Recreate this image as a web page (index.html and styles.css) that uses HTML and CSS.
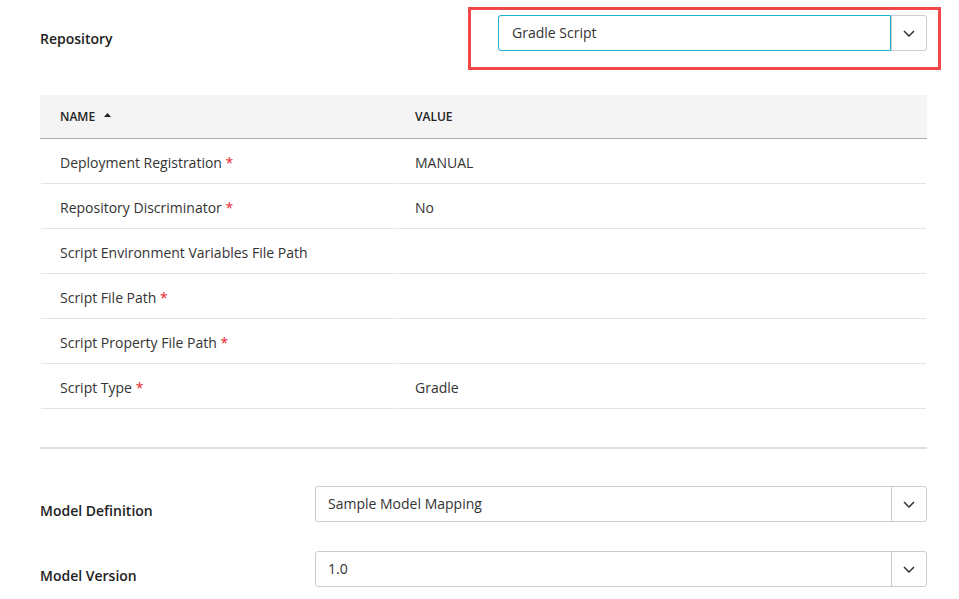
FILE: index.html
```html
<!DOCTYPE html>
<html>
<head>
<meta charset="utf-8">
<link rel="stylesheet" href="styles.css">
</head>
<body>
<div class="page">
  <div class="repo-row">
    <div class="field-label">Repository</div>
    <div class="repo-select-wrap">
      <div class="select focused">
        <div class="select-value">Gradle Script</div>
        <div class="select-btn">
          <svg width="12" height="7" viewBox="0 0 12 7"><path d="M1 1 L6 6 L11 1" fill="none" stroke="#333" stroke-width="1.5"/></svg>
        </div>
      </div>
      <div class="highlight"></div>
    </div>
  </div>

  <div class="table">
    <div class="thead">
      <div class="th">NAME <svg class="caret" width="7" height="4" viewBox="0 0 7 4"><path d="M0 4 L3.5 0 L7 4 Z" fill="#222"/></svg></div>
      <div class="th">VALUE</div>
    </div>
    <div class="tr"><div class="td">Deployment Registration <span class="req">*</span></div><div class="td">MANUAL</div></div>
    <div class="tr"><div class="td">Repository Discriminator <span class="req">*</span></div><div class="td">No</div></div>
    <div class="tr"><div class="td">Script Environment Variables File Path</div><div class="td"></div></div>
    <div class="tr"><div class="td">Script File Path <span class="req">*</span></div><div class="td"></div></div>
    <div class="tr"><div class="td">Script Property File Path <span class="req">*</span></div><div class="td"></div></div>
    <div class="tr"><div class="td">Script Type <span class="req">*</span></div><div class="td">Gradle</div></div>
  </div>

  <div class="separator"></div>

  <div class="form-row first">
    <div class="field-label wide">Model Definition</div>
    <div class="select grow">
      <div class="select-value">Sample Model Mapping</div>
      <div class="select-btn">
        <svg width="12" height="7" viewBox="0 0 12 7"><path d="M1 1 L6 6 L11 1" fill="none" stroke="#333" stroke-width="1.5"/></svg>
      </div>
    </div>
  </div>
  <div class="form-row">
    <div class="field-label wide">Model Version</div>
    <div class="select grow">
      <div class="select-value">1.0</div>
      <div class="select-btn">
        <svg width="12" height="7" viewBox="0 0 12 7"><path d="M1 1 L6 6 L11 1" fill="none" stroke="#333" stroke-width="1.5"/></svg>
      </div>
    </div>
  </div>
</div>
</body>
</html>
```

FILE: styles.css
```css
* { box-sizing: border-box; }
html, body { margin: 0; padding: 0; background: #fff; }
body {
  font-family: "Open Sans", "Noto Sans", sans-serif;
  font-size: 14px;
  color: #333;
}
.page {
  width: 927px;
  padding: 15px 0 0 40px;
}
.repo-row {
  display: flex;
  align-items: flex-start;
}
.field-label {
  font-weight: 600;
  color: #222;
  line-height: 20px;
  padding-top: 14px;
}
.field-label.wide { width: 275px; flex: none; padding-top: 15px; }
.repo-select-wrap {
  position: relative;
  margin-left: auto;
  width: 429px;
}
.highlight {
  position: absolute;
  top: -8px;
  left: -30px;
  right: -14px;
  bottom: -19px;
  border: 3px solid #f04848;
  pointer-events: none;
}
.select {
  display: flex;
  height: 36px;
  border: 1px solid #ccc;
  border-radius: 3px;
  background: #fff;
}
.select.grow { flex: 1; }
.select-value {
  flex: 1;
  padding-left: 12px;
  line-height: 34px;
  color: #333;
}
.select.focused .select-value {
  border: 1px solid #17b3dc;
  margin: -1px 0 -1px -1px;
  border-radius: 3px 0 0 3px;
  line-height: 34px;
  padding-left: 13px;
}
.select-btn {
  width: 35px;
  flex: none;
  border-left: 1px solid #ccc;
  display: flex;
  align-items: center;
  justify-content: center;
}
.table {
  margin-top: 44px;
}
.thead {
  display: grid;
  grid-template-columns: 355px 1fr;
  height: 44px;
  background: #f4f4f4;
  border-bottom: 1px solid #a9abb8;
}
.th {
  font-size: 12px;
  font-weight: 600;
  color: #222;
  line-height: 43px;
  padding-left: 20px;
  display: flex;
  align-items: center;
}
.caret { margin-left: 9px; margin-top: -4px; }
.tr {
  display: grid;
  grid-template-columns: 353px 1fr;
  column-gap: 1px;
  padding: 0 1px;
}
.td {
  height: 45px;
  line-height: 40px;
  padding-top: 4px;
  border-bottom: 1px solid #e3e3e3;
  padding-left: 19px;
  color: #333;
}
.tr .td:last-child { padding-left: 20px; }
.req { color: #e8232e; }
.separator {
  margin-top: 38px;
  height: 2px;
  background: #dedede;
}
.form-row {
  display: flex;
  align-items: flex-start;
  margin-top: 29px;
}
.form-row.first { margin-top: 37px; }
```
